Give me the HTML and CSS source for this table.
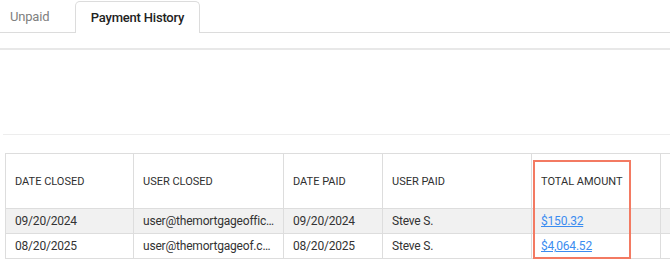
FILE: index.html
```html
<!DOCTYPE html>
<html lang="en">
<head>
<meta charset="utf-8">
<title>Payment History</title>
<link rel="stylesheet" href="styles.css">
</head>
<body>
<div class="tabs">
  <div class="tab">Unpaid</div>
  <div class="tab active">Payment History</div>
</div>
<div class="toolbar"></div>
<div class="panel"></div>
<div class="table-wrap">
  <table class="grid">
    <colgroup>
      <col class="c1"><col class="c2"><col class="c3"><col class="c4"><col class="c5"><col class="c6">
    </colgroup>
    <thead>
      <tr>
        <th>DATE CLOSED</th>
        <th>USER CLOSED</th>
        <th>DATE PAID</th>
        <th>USER PAID</th>
        <th>TOTAL AMOUNT</th>
        <th></th>
      </tr>
    </thead>
    <tbody>
      <tr class="alt">
        <td>09/20/2024</td>
        <td>user@themortgageoffic…</td>
        <td>09/20/2024</td>
        <td>Steve S.</td>
        <td><a href="#" class="amt">$150.32</a></td>
        <td></td>
      </tr>
      <tr>
        <td>08/20/2025</td>
        <td>user@themortgageof.c…</td>
        <td>08/20/2025</td>
        <td>Steve S.</td>
        <td><a href="#" class="amt">$4,064.52</a></td>
        <td></td>
      </tr>
    </tbody>
  </table>
  <div class="highlight"></div>
</div>
</body>
</html>
```
FILE: styles.css
```css
html, body {
  margin: 0;
  padding: 0;
  background: #fff;
  overflow: hidden;
}
body {
  font-family: Roboto, "Liberation Sans", sans-serif;
  color: #333;
  width: 670px;
  height: 261px;
}
.tabs {
  display: flex;
  align-items: flex-end;
  height: 33px;
  border-bottom: 1px solid #dcdcdc;
  box-sizing: border-box;
  padding-top: 2px;
}
.tab {
  font-size: 13px;
  letter-spacing: -0.2px;
  color: #808080;
  width: 75px;
  height: 31px;
  line-height: 32px;
  padding: 0 0 0 10px;
  box-sizing: border-box;
}
.tab.active {
  color: #222;
  font-weight: 500;
  width: 125px;
  padding: 0;
  text-align: center;
  background: #fff;
  border: 1px solid #dcdcdc;
  border-bottom: none;
  border-radius: 5px 5px 0 0;
  height: 32px;
  margin-bottom: -1px;
}
.toolbar {
  height: 17px;
  border-bottom: 2px solid #e8e8e8;
  box-sizing: border-box;
}
.panel {
  height: 84px;
  margin-left: 3px;
  border-bottom: 1px solid #ededed;
}
.table-wrap {
  position: relative;
  margin: 18px 0 0 5px;
}
.grid {
  border-collapse: collapse;
  table-layout: fixed;
  width: 700px;
  font-size: 12px;
}
.c1 { width: 128px; }
.c2 { width: 150px; }
.c3 { width: 99px; }
.c4 { width: 149px; }
.c5 { width: 129px; }
.c6 { width: 45px; }
.grid th, .grid td {
  border: 1px solid #dddddd;
  text-align: left;
  padding: 0 9px;
  white-space: nowrap;
  overflow: hidden;
}
.grid th {
  height: 54px;
  font-size: 11px;
  font-weight: 400;
  color: #2f2f2f;
}
.grid td {
  height: 24px;
  letter-spacing: -0.2px;
  color: #333;
}
.grid tr.alt td {
  background: #f1f1f1;
}
.amt {
  color: #3b8cf0;
  text-decoration: underline;
}
.highlight {
  position: absolute;
  left: 528px;
  top: 7px;
  width: 98px;
  height: 99px;
  border: 2px solid #f37a62;
  box-sizing: border-box;
  pointer-events: none;
}
```
